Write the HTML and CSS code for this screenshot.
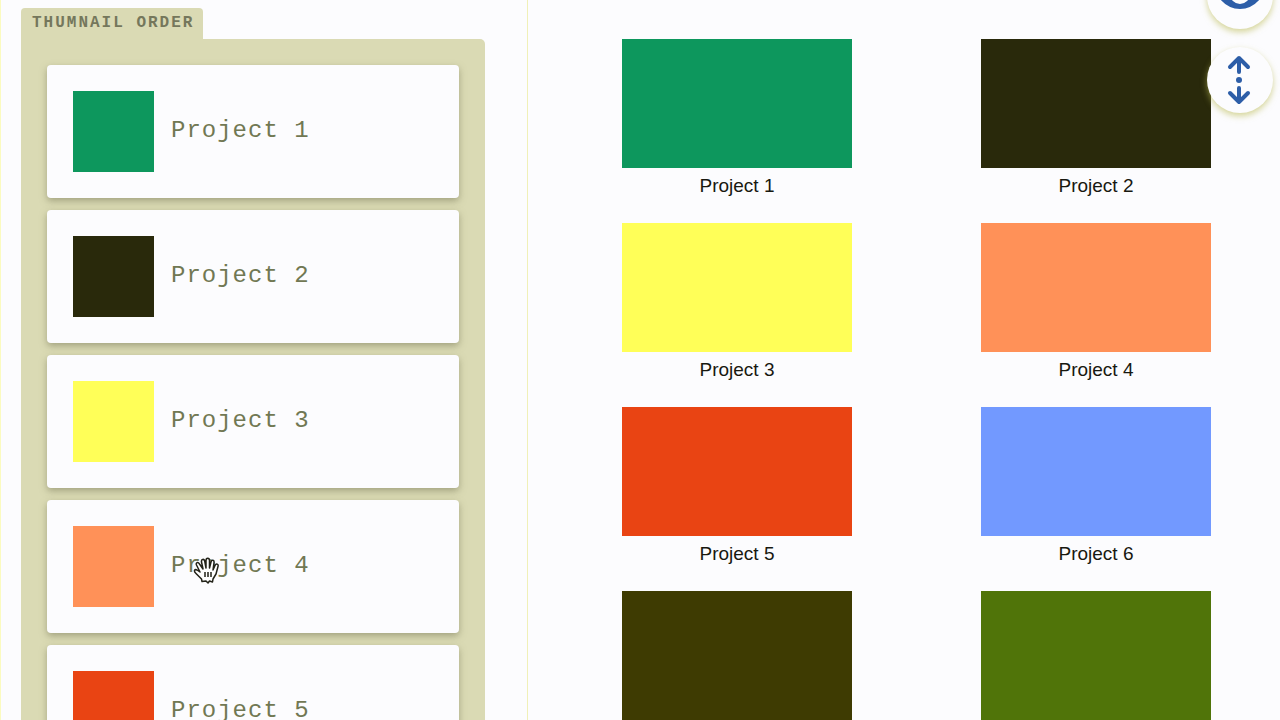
FILE: index.html
```html
<!DOCTYPE html>
<html lang="en">
<head>
<meta charset="utf-8">
<meta name="viewport" content="width=device-width, initial-scale=1">
<title>Thumbnail order</title>
<link rel="stylesheet" href="styles.css">
</head>
<body>
<div class="app">
  <aside class="sidebar">
    <h2 class="tab">THUMNAIL ORDER</h2>
    <ul class="panel">
      <li class="card"><span class="swatch green"></span><span class="name">Project 1</span></li>
      <li class="card"><span class="swatch black"></span><span class="name">Project 2</span></li>
      <li class="card"><span class="swatch yellow"></span><span class="name">Project 3</span></li>
      <li class="card"><span class="swatch orange"></span><span class="name">Project 4</span>
        <svg class="cursor" viewBox="0 0 28 28" aria-hidden="true"><path d="M9 24.500 8.500 22 3 16.500C0 13.500 2 12 4 13l3 2L3.500 8C2.500 5.500 5 4.500 6.500 7L10 12 8.500 5c-.5-3 2.500-3.500 3.200-1L13 11V3.500c0-3 3.500-3 3.500 0V11L18 5c.8-2.700 3.500-2 3 .8L20 13l2-4.500c1.200-2.500 3.700-1.500 3 1L23 17l-3 5-.5 3-3-1-1.500 2-2-2z"/><path d="M12 15v5M15 15v5M18 15v5"/></svg>
      </li>
      <li class="card"><span class="swatch red"></span><span class="name">Project 5</span></li>
    </ul>
  </aside>
  <main class="preview">
    <figure class="thumb"><div class="picture green"></div><figcaption>Project 1</figcaption></figure>
    <figure class="thumb"><div class="picture black"></div><figcaption>Project 2</figcaption></figure>
    <figure class="thumb"><div class="picture yellow"></div><figcaption>Project 3</figcaption></figure>
    <figure class="thumb"><div class="picture orange"></div><figcaption>Project 4</figcaption></figure>
    <figure class="thumb"><div class="picture red"></div><figcaption>Project 5</figcaption></figure>
    <figure class="thumb"><div class="picture blue"></div><figcaption>Project 6</figcaption></figure>
    <figure class="thumb"><div class="picture umber"></div></figure>
    <figure class="thumb"><div class="picture olive"></div></figure>
  </main>
  <div class="actions">
    <button class="action" type="button" aria-label="Preview"><svg viewBox="0 0 66 66" aria-hidden="true"><path class="solid" fill-rule="evenodd" d="M8 29Q18 12 33 12T58 29Q48 46 33 46T8 29ZM23 31a10 10 0 1 0 20 0a10 10 0 1 0-20 0Z"/><circle class="solid" cx="33" cy="29" r="5"/></svg></button>
    <button class="action" type="button" aria-label="Reorder"><svg viewBox="0 0 66 66" aria-hidden="true"><path d="M32 25V11M23 20l9-9 9 9M32 41v14M23 46l9 9 9-9"/><circle class="solid" cx="32" cy="33" r="3"/></svg></button>
  </div>
</div>
</body>
</html>
```
FILE: styles.css
```css
* { box-sizing: border-box; }
body { margin: 0; background: #fcfcfe; }
.app {
  position: relative;
  display: grid;
  grid-template-columns: minmax(0, 33fr) minmax(0, 47fr);
  height: 100vh;
  overflow: hidden;
}
.sidebar {
  padding: 8px 42px 0 20px;
  border-left: 1px solid #fbfbc0;
  border-right: 1px solid #f0f0b8;
}
.tab {
  width: fit-content;
  margin: 0;
  padding: 0 9px 0 11px;
  border-radius: 4px 4px 0 0;
  background: #dadab4;
  color: #75775c;
  font: bold 16px/31px "Liberation Mono", monospace;
  letter-spacing: 2px;
}
.panel {
  display: grid;
  gap: 12px;
  margin: 0;
  padding: 26px;
  border-radius: 0 5px 5px 5px;
  background: #dadab4;
  list-style: none;
}
.card {
  position: relative;
  display: flex;
  align-items: center;
  gap: 17px;
  padding: 26px;
  border-radius: 4px;
  background: #fcfcfe;
  box-shadow: 0 3px 7px #7777558c;
  color: #717853;
  font: 24px/32px "Liberation Mono", monospace;
  letter-spacing: 1px;
}
.name { padding-bottom: 1px; }
.swatch { width: 81px; height: 81px; flex: none; }
.cursor {
  position: absolute;
  left: 146px;
  top: 57px;
  width: 28px;
  height: 28px;
  fill: #fff;
  stroke: #222218;
  stroke-width: 1.5;
  stroke-linejoin: round;
}
.preview {
  display: grid;
  grid-template-columns: 230px 230px;
  align-content: start;
  justify-content: space-between;
  gap: 19px;
  padding: 39px 69px 0 94px;
}
.thumb {
  margin: 0;
  color: #181810;
  font: 19px/36px "Liberation Sans", Arial, sans-serif;
  text-align: center;
}
.picture { height: 129px; }
.green { background: #0d975d; }
.black { background: #29290b; }
.yellow { background: #ffff58; }
.orange { background: #ff9158; }
.red { background: #e94413; }
.blue { background: #7299ff; }
.umber { background: #3e3b02; }
.olive { background: #507409; }
.actions {
  position: absolute;
  right: 7px;
  top: -37px;
  display: grid;
  gap: 18px;
}
.action {
  width: 66px;
  height: 66px;
  padding: 0;
  border: 0;
  border-radius: 50%;
  background: #fcfcfe;
  box-shadow: 0 3px 6px #bbbb5599;
}
.action svg {
  display: block;
  fill: none;
  stroke: #2d5ea8;
  stroke-width: 4;
  stroke-linecap: round;
  stroke-linejoin: round;
}
.action .solid { fill: #2d5ea8; stroke: none; }
```
